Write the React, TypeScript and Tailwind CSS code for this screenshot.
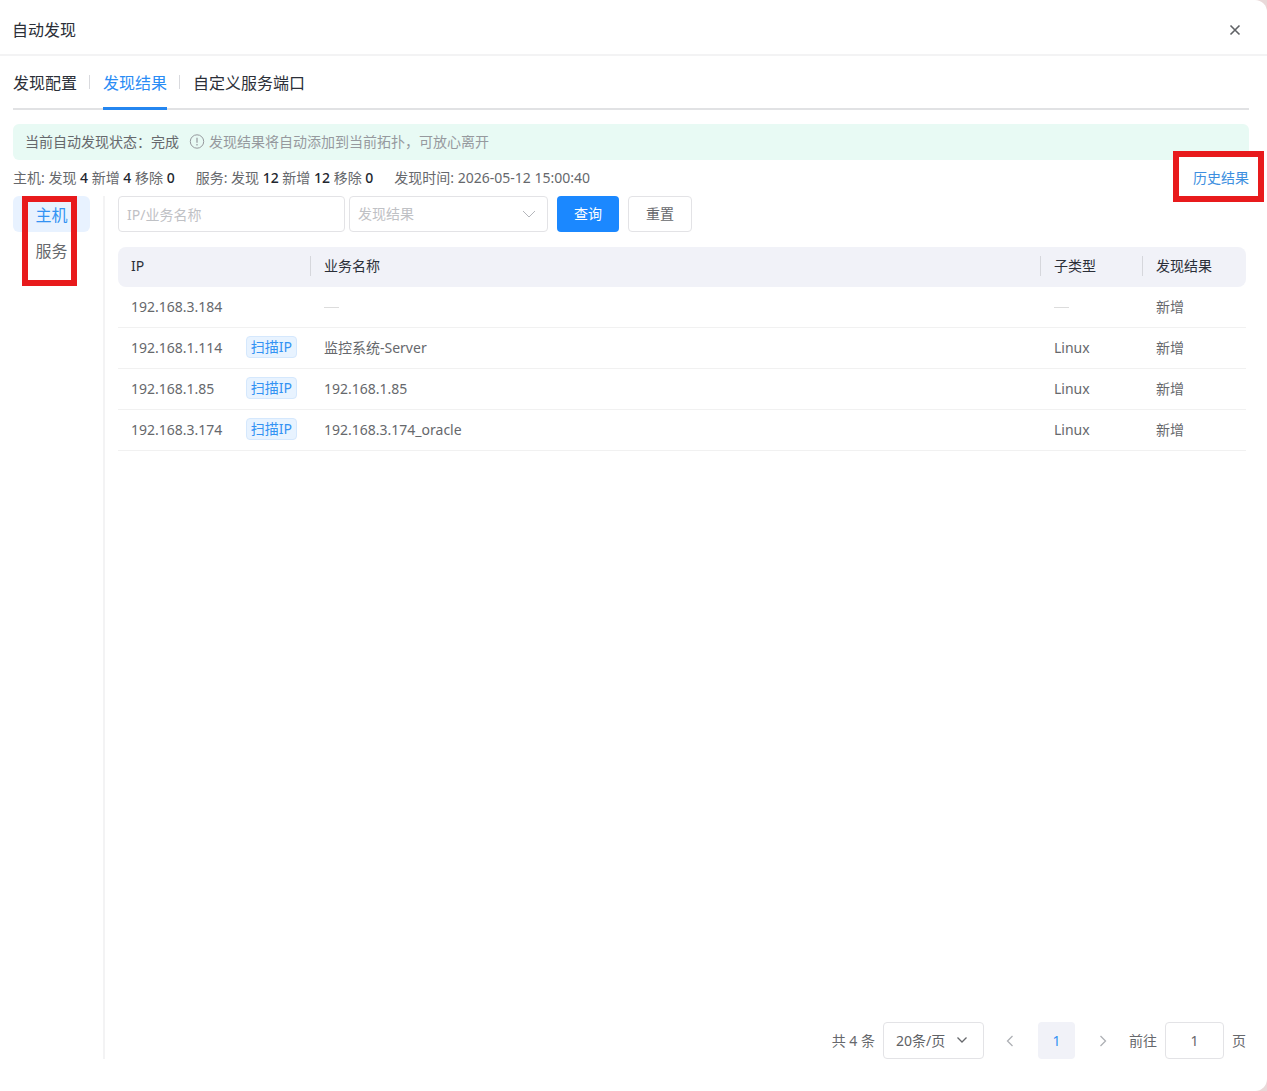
import { useState } from 'react'

interface HostRow {
  ip: string
  scanned: boolean
  name?: string
  subType?: string
  result: string
}

const TABS = ['发现配置', '发现结果', '自定义服务端口']
const SIDE_TABS = ['主机', '服务']

const ROWS: HostRow[] = [
  { ip: '192.168.3.184', scanned: false, result: '新增' },
  { ip: '192.168.1.114', scanned: true, name: '监控系统-Server', subType: 'Linux', result: '新增' },
  { ip: '192.168.1.85', scanned: true, name: '192.168.1.85', subType: 'Linux', result: '新增' },
  { ip: '192.168.3.174', scanned: true, name: '192.168.3.174_oracle', subType: 'Linux', result: '新增' },
]

function Icon({ d, className }: { d: string; className: string }) {
  return (
    <svg viewBox="0 0 16 16" fill="none" stroke="currentColor" className={className} aria-hidden="true">
      <path d={d} />
    </svg>
  )
}

function Empty() {
  return <span className="block h-px w-[15px] bg-[#dcdcdc]" />
}

function Stats({ label, found, added, removed }: { label: string; found: number; added: number; removed: number }) {
  return (
    <span>
      {label}: 发现 <b className="font-medium text-[#22262e]">{found}</b> 新增{' '}
      <b className="font-medium text-[#22262e]">{added}</b> 移除{' '}
      <b className="font-medium text-[#22262e]">{removed}</b>
    </span>
  )
}

function HostTable({ rows }: { rows: HostRow[] }) {
  return (
    <table className="w-full table-fixed border-separate border-spacing-0 text-left">
      <colgroup>
        <col className="w-[192px]" />
        <col />
        <col className="w-[102px]" />
        <col className="w-[104px]" />
      </colgroup>
      <thead>
        <tr className="h-10 text-[#2b2f38]">
          {['IP', '业务名称', '子类型', '发现结果'].map((title, i) => (
            <th
              key={title}
              className="bg-[#f1f2f8] px-0 pt-0 pb-0.5 font-normal first:rounded-l-lg last:rounded-r-lg"
            >
              <div className={i > 0 ? 'border-l border-[#d6d7dc] px-[13px]' : 'px-[13px]'}>{title}</div>
            </th>
          ))}
        </tr>
      </thead>
      <tbody>
        {rows.map(row => (
          <tr key={row.ip} className="h-[41px]">
            <td className="border-b border-[#f1f1f1] px-[13px] py-0">
              <div className="flex items-center justify-between">
                {row.ip}
                {row.scanned && (
                  <span className="mb-0.5 rounded-sm border border-[#d5e8fd] bg-[#e8f3ff] px-1 text-[#3392f3]">
                    扫描IP
                  </span>
                )}
              </div>
            </td>
            <td className="border-b border-[#f1f1f1] px-[14px] py-0">{row.name ?? <Empty />}</td>
            <td className="border-b border-[#f1f1f1] px-[14px] py-0">{row.subType ?? <Empty />}</td>
            <td className="border-b border-[#f1f1f1] px-[14px] py-0">{row.result}</td>
          </tr>
        ))}
      </tbody>
    </table>
  )
}

function Pagination({ total }: { total: number }) {
  const [page, setPage] = useState('1')

  return (
    <div className="flex items-center justify-end pr-[3px]">
      <span className="mr-2">共 {total} 条</span>
      <div className="relative">
        <select
          aria-label="每页条数"
          className="h-[37px] w-[101px] appearance-none rounded border border-[#e3e3e6] bg-white pl-3 text-[#606266]"
        >
          <option>20条/页</option>
        </select>
        <Icon
          d="M3.5 5.5 8 10l4.5-4.5"
          className="pointer-events-none absolute top-[10px] right-[14px] size-4 stroke-[1.3]"
        />
      </div>
      <button aria-label="上一页" className="ml-2 flex h-[37px] w-9 items-center justify-center text-[#aeb0b5]">
        <Icon d="M10.5 3 5.5 8l5 5" className="size-4 stroke-[1.3]" />
      </button>
      <button className="mx-[10px] size-[37px] rounded bg-[#f1f2f8] text-[#3392f3]">{page}</button>
      <button aria-label="下一页" className="mr-2 flex h-[37px] w-9 items-center justify-center text-[#aeb0b5]">
        <Icon d="M5.5 3l5 5-5 5" className="size-4 stroke-[1.3]" />
      </button>
      <label htmlFor="jump">前往</label>
      <input
        id="jump"
        value={page}
        onChange={e => setPage(e.target.value)}
        className="mx-2 h-[37px] w-[59px] rounded border border-[#e3e3e6] text-center"
      />
      <span>页</span>
    </div>
  )
}

export default function App() {
  const [tab, setTab] = useState('发现结果')
  const [side, setSide] = useState('主机')
  const [keyword, setKeyword] = useState('')

  return (
    <div className="min-h-screen bg-[#e9d9d9] font-['Noto_Sans','Noto_Sans_CJK_SC',sans-serif] text-sm leading-5 text-[#66686c]">
      <div className="flex min-h-screen flex-col rounded-r-xl bg-white">
        <header className="flex h-14 items-center justify-between border-b-2 border-[#f3f3f4] pt-1.5 pr-6 pl-3 text-base text-[#2b2f38]">
          <h1>自动发现</h1>
          <button aria-label="关闭" className="flex size-4 items-center justify-center text-[#606266]">
            <Icon d="M3.5 3.5l9 9M12.5 3.5l-9 9" className="size-4 stroke-[1.6]" />
          </button>
        </header>

        <main className="flex flex-1 flex-col pr-[18px] pb-8 pl-[13px]">
          <nav className="flex h-[54px] items-stretch border-b-2 border-[#e1e2e4] text-base text-[#2b2f38]">
            {TABS.map((t, i) => (
              <div key={t} className="flex items-center">
                {i > 0 && <span className="mr-[13px] ml-3 h-[14px] w-px bg-[#d9dade]" />}
                <button
                  onClick={() => setTab(t)}
                  className={
                    t === tab
                      ? '-mb-0.5 h-[54px] border-b-3 border-[#2486f0] pt-0.5 text-[#2a8cf5]'
                      : '-mb-0.5 h-[54px] border-b-3 border-transparent pt-0.5'
                  }
                >
                  {t}
                </button>
              </div>
            ))}
          </nav>

          <div className="mt-[14px] flex h-9 items-center rounded-md bg-[#e8faf4] px-3">
            <span>当前自动发现状态：完成</span>
            <svg viewBox="0 0 16 16" fill="none" stroke="#96999e" className="mr-1 ml-2.5 size-4" aria-hidden="true">
              <circle cx="8" cy="7.5" r="6.7" />
              <path d="M8 3.8v5M8 10v1.4" strokeWidth="1.2" />
            </svg>
            <span className="text-[#96999e]">发现结果将自动添加到当前拓扑，可放心离开</span>
          </div>

          <div className="flex h-9 items-center gap-[21px]">
            <Stats label="主机" found={4} added={4} removed={0} />
            <Stats label="服务" found={12} added={12} removed={0} />
            <span>发现时间: 2026-05-12 15:00:40</span>
            <div className="relative ml-auto flex h-9 items-center">
              <span className="pointer-events-none absolute -top-[9px] -right-[15px] h-[51px] w-[91px] border-6 border-[#e81a1c] bg-white" />
              <a href="#history" className="relative text-[#3d8fe0]">历史结果</a>
            </div>
          </div>

          <div className="flex flex-1">
            <aside className="relative w-[92px] border-r-2 border-[#f3f3f4] pr-[13px]">
              {SIDE_TABS.map(s => (
                <button
                  key={s}
                  onClick={() => setSide(s)}
                  className={
                    s === side
                      ? 'block h-9 w-full rounded-md bg-[#e8f2ff] pt-0.5 text-base text-[#3392f3]'
                      : 'block h-9 w-full rounded-md pt-0.5 text-base'
                  }
                >
                  {s}
                </button>
              ))}
              <span className="pointer-events-none absolute top-0 left-[9px] h-[90px] w-[55px] border-6 border-[#e81a1c]" />
            </aside>

            <section className="flex flex-1 flex-col pl-[13px]">
              <form className="flex items-center" onSubmit={e => e.preventDefault()}>
                <input
                  aria-label="IP/业务名称"
                  placeholder="IP/业务名称"
                  value={keyword}
                  onChange={e => setKeyword(e.target.value)}
                  className="h-9 w-[227px] rounded border border-[#e3e3e6] px-2 placeholder:text-[#bfc1c5]"
                />
                <div className="relative ml-1">
                  <select
                    aria-label="发现结果"
                    className="h-9 w-[199px] appearance-none rounded border border-[#e3e3e6] bg-white px-2 text-[#bfc1c5]"
                  >
                    <option>发现结果</option>
                  </select>
                  <Icon
                    d="M2 5l6 6 6-6"
                    className="pointer-events-none absolute top-[10px] right-[11px] size-4 text-[#b4b6bb]"
                  />
                </div>
                <button type="submit" className="ml-[9px] h-9 w-[62px] rounded bg-[#1b88ff] text-white">
                  查询
                </button>
                <button
                  type="button"
                  onClick={() => setKeyword('')}
                  className="ml-[9px] h-9 w-16 rounded border border-[#e3e3e6]"
                >
                  重置
                </button>
              </form>

              <div className="mt-[15px] flex-1 pr-[3px]">
                <HostTable rows={ROWS} />
              </div>
              <Pagination total={ROWS.length} />
            </section>
          </div>
        </main>
      </div>
    </div>
  )
}
